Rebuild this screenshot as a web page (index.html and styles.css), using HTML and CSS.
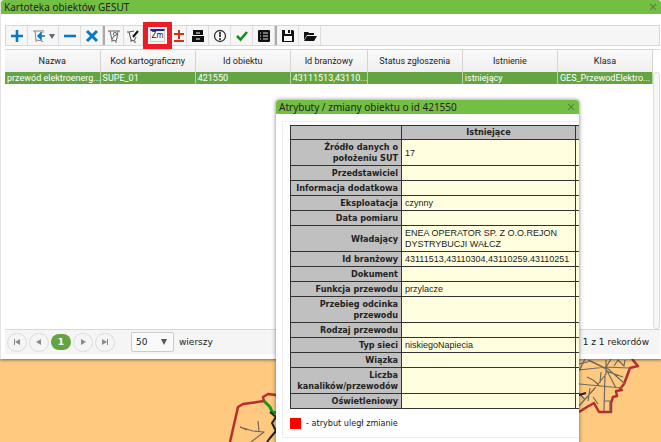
FILE: index.html
```
<!DOCTYPE html>
<html lang="pl">
<head>
    <meta charset="utf-8">
    <title>Kartoteka obiektów GESUT</title>
    <link rel="stylesheet" href="styles.css">
</head>
<body>
    <svg class="map" width="661" height="442" viewBox="0 0 661 442" aria-hidden="true">
        <g class="border-line">
            <path d="M230 442L238 407L243 404L264 401L263 397L268 394L276 395"/>
            <path d="M632 359L638 366L630 368L624 384L620 389L622 390L616 391L617 396L613 397L611 403L611 412L599 412L594 403L587 407L579 412"/>
        </g>
        <path class="green-line" d="M264 401L270 407L272 412L277 413"/>
        <path class="black-line" d="M270 412L276 417L272 423L276 431L270 438L267 442"/>
        <g class="road">
            <path d="M240 427L253 431L264 432L251 442M258 421L259 431M240 427L247 430"/>
            <path d="M579 364L591 361L603 367L630 368M579 370L606 367L625 384M588 360L606 369L616 388M606 360L606 374L595 388L579 406M579 384L622 388M587 377L593 380L599 385M601 372L600 383M605 374L604 411M604 401L610 401L610 411M593 397L598 404M579 393L585 400M585 359L579 371M605 369L611 359M614 366L618 360L624 366L625 360M590 388L588 401M606 371L623 377"/>
        </g>
        <path class="black-line" d="M579 395L586 393"/>
    </svg>

    <main class="window">
        <header class="window-title">
            <h1>Kartoteka obiektów GESUT</h1>
            <button class="close" aria-label="Zamknij">×</button>
        </header>
        <div class="window-body">
            <div class="toolbar">
                <button aria-label="Dodaj"><svg width="14" height="14" viewBox="0 0 14 14"><path d="M7 1V13M1 7H13" stroke="#0878c8" stroke-width="2.6"/></svg></button>
                <button class="wide" aria-label="Import">
                    <svg width="14" height="14" viewBox="0 0 14 14" fill="none"><path d="M10 2L3 2L4 11L10 12M2 1V3M4 11V13M9 11L11 13M11 1V4" stroke="#888"/><path d="M13 7H7M9 4L6 7L9 10M9 3V11" stroke="#0878c8" stroke-width="1.5"/></svg>
                    <svg width="6" height="6" viewBox="0 0 6 6"><path d="M0 1H6L3 6Z" fill="#667"/></svg>
                </button>
                <button aria-label="Usuń"><svg width="14" height="14" viewBox="0 0 14 14"><path d="M1 7H13" stroke="#0878c8" stroke-width="2.6"/></svg></button>
                <button aria-label="Wyczyść"><svg width="14" height="14" viewBox="0 0 14 14"><path d="M2 2L12 12M12 2L2 12" stroke="#0878c8" stroke-width="3"/></svg></button>
                <span class="separator"></span>
                <button class="narrow" aria-label="Pokaż na mapie"><svg width="14" height="14" viewBox="0 0 14 14" fill="none" stroke="#666"><path d="M3 2L11 2L10 9L9 12L5 11Z"/><circle cx="8" cy="5" r="1.6"/><path d="M7 7L5 10M2 1V3M12 1V3M4 12H6M8 13H10"/></svg></button>
                <button class="narrow" aria-label="Edytuj geometrię"><svg width="14" height="14" viewBox="0 0 14 14" fill="none" stroke="#555"><path d="M8 2L3 3L5 11L8 12L10 8M2 2V4M4 12H6M8 13H10"/><path d="M12 2L7 8" stroke="#111" stroke-width="2"/></svg></button>
                <button class="marked" aria-label="Zmiany">
                    <span class="changes">Zm</span>
                </button>
                <button class="slim" aria-label="Różnice"><svg width="12" height="14" viewBox="0 0 12 14"><path d="M6 1V10M1 5H11M1 12H11" stroke="#d03018" stroke-width="2"/></svg></button>
                <button aria-label="Archiwum"><svg width="12" height="14" viewBox="0 0 12 14"><path d="M1 1H11V6H1ZM0 7H12V13H0Z" fill="#111"/><path d="M4 4H8M4 10H8" stroke="#fff"/></svg></button>
                <button aria-label="Uwagi"><svg width="14" height="14" viewBox="0 0 14 14" fill="none"><circle cx="7" cy="7" r="5.5" stroke="#333" stroke-width="1.3"/><path d="M7 3V8M7 9V11" stroke="#222" stroke-width="1.6"/></svg></button>
                <button aria-label="Zatwierdź"><svg width="14" height="14" viewBox="0 0 14 14" fill="none"><path d="M2 7L5.5 10.5L12 3" stroke="#15901d" stroke-width="2.6"/></svg></button>
                <button aria-label="Lista"><svg width="14" height="14" viewBox="0 0 14 14"><rect x="1" y="1" width="12" height="12" rx="1" fill="#111"/><path d="M3 4H4M6 4H11M3 7H4M6 7H11M3 10H4M6 10H11" stroke="#ddd"/></svg></button>
                <span class="separator"></span>
                <button aria-label="Zapisz"><svg width="14" height="14" viewBox="0 0 14 14"><path d="M1 1H12L13 2V13H1Z" fill="#111"/><path d="M4 1H10V5H4ZM3 7H11V12H3Z" fill="#f5f5f5"/><path d="M7 1H9V4H7Z" fill="#111"/></svg></button>
                <button aria-label="Otwórz"><svg width="14" height="14" viewBox="0 0 14 14"><path d="M1 11V3H5L6 4H11V6H4Z" fill="#111"/><path d="M4 7H14L11 12H1Z" fill="#111"/></svg></button>
            </div>

            <div class="grid">
                <table class="records">
                    <thead>
                        <tr>
                            <th>Nazwa</th>
                            <th>Kod kartograficzny</th>
                            <th>Id obiektu</th>
                            <th class="short">Id branżowy</th>
                            <th>Status zgłoszenia</th>
                            <th>Istnienie</th>
                            <th>Klasa</th>
                        </tr>
                    </thead>
                    <tbody>
                        <tr>
                            <td>przewód elektroenerg...</td>
                            <td>SUPE_01</td>
                            <td>421550</td>
                            <td>43111513,43110...</td>
                            <td></td>
                            <td>istniejący</td>
                            <td>GES_PrzewodElektro...</td>
                        </tr>
                    </tbody>
                </table>
                <div class="scrollbar"></div>
            </div>

            <footer class="pager">
                <button class="page" aria-label="Pierwsza strona"><svg width="8" height="8" viewBox="0 0 8 8"><path d="M1 1H2V7H1ZM7 1V7L2 4Z"/></svg></button>
                <button class="page" aria-label="Poprzednia strona"><svg width="8" height="8" viewBox="0 0 8 8"><path d="M6 1V7L1 4Z"/></svg></button>
                <button class="page current">1</button>
                <button class="page" aria-label="Następna strona"><svg width="8" height="8" viewBox="0 0 8 8"><path d="M2 1V7L7 4Z"/></svg></button>
                <button class="page" aria-label="Ostatnia strona"><svg width="8" height="8" viewBox="0 0 8 8"><path d="M1 1V7L6 4ZM6 1H7V7H6Z"/></svg></button>
                <span class="rows-select">
                    <select id="rows"><option>50</option></select>
                    <svg width="6" height="6" viewBox="0 0 6 6"><path d="M0 0H6L3 6Z"/></svg>
                </span>
                <label for="rows">wierszy</label>
                <span class="summary">1 z 1 rekordów</span>
            </footer>
        </div>
    </main>

    <section class="popup">
        <header class="window-title">
            <h2>Atrybuty / zmiany obiektu o id 421550</h2>
            <button class="close" aria-label="Zamknij">×</button>
        </header>
        <div class="popup-body">
            <table class="attributes">
                <thead>
                    <tr><th></th><th class="value">Istniejące</th><th class="next"></th></tr>
                </thead>
                <tbody>
                    <tr><th>Źródło danych o<br>położeniu SUT</th><td>17</td><td></td></tr>
                    <tr><th>Przedstawiciel</th><td></td><td></td></tr>
                    <tr><th>Informacja dodatkowa</th><td></td><td></td></tr>
                    <tr><th>Eksploatacja</th><td>czynny</td><td></td></tr>
                    <tr><th>Data pomiaru</th><td></td><td></td></tr>
                    <tr><th>Władający</th><td>ENEA OPERATOR SP. Z O.O.REJON<br>DYSTRYBUCJI WAŁCZ</td><td></td></tr>
                    <tr><th>Id branżowy</th><td>43111513,43110304,43110259.43110251</td><td></td></tr>
                    <tr><th>Dokument</th><td></td><td></td></tr>
                    <tr><th>Funkcja przewodu</th><td>przylacze</td><td></td></tr>
                    <tr><th>Przebieg odcinka<br>przewodu</th><td></td><td></td></tr>
                    <tr><th>Rodzaj przewodu</th><td></td><td></td></tr>
                    <tr><th>Typ sieci</th><td>niskiegoNapiecia</td><td></td></tr>
                    <tr><th>Wiązka</th><td></td><td></td></tr>
                    <tr><th>Liczba<br>kanalików/przewodów</th><td></td><td></td></tr>
                    <tr><th>Oświetleniowy</th><td></td><td></td></tr>
                </tbody>
            </table>
            <p class="legend"><span class="swatch"></span>- atrybut uległ zmianie</p>
        </div>
    </section>
</body>
</html>
```

FILE: styles.css
```
* {
    box-sizing: border-box;
}

body {
    margin: 0;
    min-height: 100vh;
    position: relative;
    overflow: hidden;
    background-color: #ffc97f;
    color: #222;
    font-family: "DejaVu Sans Condensed", "DejaVu Sans", sans-serif;
    font-size: 9px;
    line-height: 11px;
}

button,
select {
    margin: 0;
    padding: 0;
    border: none;
    background: none;
    color: inherit;
    font: inherit;
    cursor: pointer;
}

svg {
    display: block;
}

/* map */
.map {
    position: absolute;
    top: 0;
    left: 0;
    fill: none;
    stroke-linejoin: round;
}

.border-line {
    stroke: #b62e30;
    stroke-width: 2.5;
}

.green-line {
    stroke: #0c9c12;
    stroke-width: 3;
}

.black-line {
    stroke: #222;
    stroke-width: 2;
}

.road {
    stroke: #6f6b5f;
    stroke-width: 1.2;
}

/* windows */
.window {
    position: relative;
    background-color: #fff;
    border-left: 1px solid #e4e4e4;
    box-shadow: 0 1px 3px rgba(0,0,0,0.5);
}

.window-title {
    display: flex;
    align-items: center;
    justify-content: space-between;
    height: 14px;
    padding: 0 3px;
    background-color: #72bf44;
    border-radius: 3px 3px 0 0;
}

.window-title h1,
.window-title h2 {
    margin: 0;
    font-family: "Noto Sans", sans-serif;
    font-size: 10px;
    font-weight: normal;
}

.close {
    color: #5a7f48;
    font-family: "DejaVu Sans", sans-serif;
    font-size: 12px;
    line-height: 14px;
}

.window-body {
    padding: 11px 1px 5px 4px;
}

/* toolbar */
.toolbar {
    display: flex;
    align-items: stretch;
    height: 21px;
    border: 1px solid #d8d8d8;
    background-color: #f6f6f6;
}

.toolbar button {
    display: flex;
    align-items: center;
    justify-content: center;
    gap: 3px;
    width: 22px;
    border-right: 1px solid #ddd;
}

.toolbar .wide {
    width: 31px;
}

.toolbar .narrow {
    width: 19px;
}

.toolbar .slim {
    width: 15px;
}

.toolbar .marked {
    width: 29px;
    margin: -4px 0;
    border: 5px solid #ed1c24;
}

.changes {
    padding: 0 1px;
    border: 1px solid #ccc;
    border-top: 2px solid #1a22a8;
    font-size: 8px;
    line-height: 10px;
}

.separator {
    width: 2px;
    background-color: #aaa;
}

/* records */
.grid {
    display: flex;
    height: 280px;
    margin-top: 3px;
    border-top: 1px solid #d8d8d8;
}

.records {
    align-self: flex-start;
    width: 100%;
    min-width: 0;
    table-layout: fixed;
    border-collapse: collapse;
    font-family: Roboto, sans-serif;
}

.records th {
    height: 22px;
    padding: 0;
    border-right: 1px solid #d4d4d4;
    background-image: linear-gradient(#fafafa, #efefef);
    font-weight: normal;
}

.records .short {
    width: 77px;
}

.records td {
    height: 12px;
    padding: 0 0 0 2px;
    overflow: hidden;
    border-right: 1px solid #b5d5a0;
    background-color: #64a443;
    color: #fff;
    white-space: nowrap;
}

.scrollbar {
    flex: none;
    width: 7px;
    margin-top: 22px;
    border: 1px solid #ddd;
    border-radius: 3px;
    background-color: #f7f7f7;
}

/* pager */
.pager {
    display: flex;
    align-items: center;
    gap: 2px;
    height: 25px;
    padding: 0 11px 0 2px;
    border-top: 1px solid #d8d8d8;
    background-color: #f5f5f5;
    font-family: "DejaVu Sans", sans-serif;
}

.page {
    display: flex;
    align-items: center;
    justify-content: center;
    width: 20px;
    height: 19px;
    border: 1px solid #ddd;
    border-radius: 10px;
    fill: #888b98;
}

.page.current {
    height: 16px;
    border: none;
    background-color: #64a443;
    color: #fff;
    font-weight: bold;
}

.rows-select {
    display: flex;
    align-items: center;
    width: 43px;
    height: 20px;
    margin: 0 3px 0 14px;
    padding: 0 6px 0 4px;
    border: 1px solid #ccc;
    border-radius: 2px;
    background-color: #fafafa;
    fill: #556;
}

.rows-select select {
    flex: 1;
    min-width: 0;
    appearance: none;
}

.summary {
    margin-left: auto;
}

/* attributes popup */
.popup {
    position: absolute;
    top: 100px;
    left: 276px;
    width: 303px;
    background-color: #fff;
    border-radius: 3px 3px 0 0;
    box-shadow: 0 0 4px rgba(0,0,0,0.5);
    padding-bottom: 10px;
}

.popup-body {
    margin: 7px 0 0 6px;
    padding: 3px 0 8px 7px;
    overflow: hidden;
    border: 1px solid #eee;
    border-right: none;
}

.attributes {
    width: 300px;
    table-layout: fixed;
    border-collapse: collapse;
}

.attributes th,
.attributes td {
    height: 15px;
    padding: 2px 3px 1px;
    border: 1px solid #333;
}

.attributes th {
    width: 111px;
    background-color: #c0c0c0;
    text-align: right;
}

.attributes td {
    background-color: #ffffe0;
    font-family: "Liberation Sans", sans-serif;
}

.attributes thead th {
    height: 14px;
    padding: 1px 3px;
}

.attributes .value {
    width: 174px;
    text-align: center;
}

.attributes .next {
    width: auto;
}

.legend {
    display: flex;
    align-items: center;
    gap: 5px;
    margin: 9px 0 0;
}

.swatch {
    width: 11px;
    height: 11px;
    background-color: #f00;
}
```
